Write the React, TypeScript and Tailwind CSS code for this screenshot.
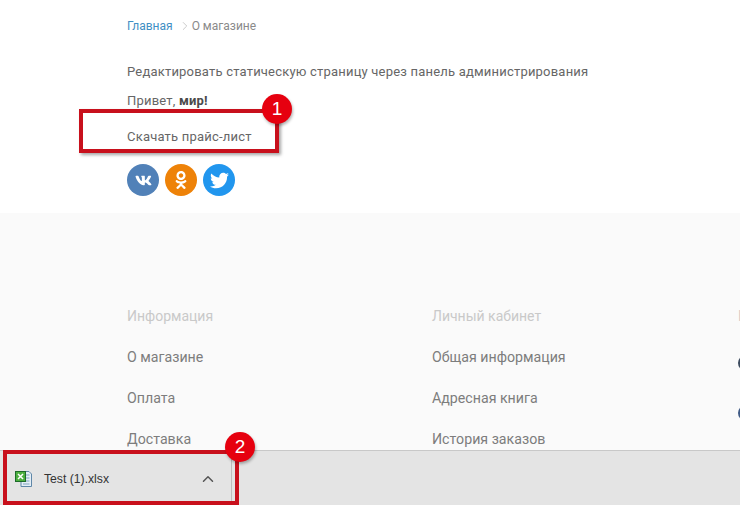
import React from 'react'
import { ChevronRight, ChevronUp } from 'lucide-react'
import { FaOdnoklassniki, FaTwitter, FaVk } from 'react-icons/fa'

const COLUMNS = [
    { title: 'Информация', width: 'w-[305px]', links: ['О магазине', 'Оплата', 'Доставка'] },
    { title: 'Личный кабинет', width: 'w-[306px]', links: ['Общая информация', 'Адресная книга', 'История заказов'] },
]

const ExcelIcon = () => (
    <svg width="18" height="18" viewBox="0 0 18 18" className="shrink-0">
        <path d="M6 1.5h8l2.5 2.5v12.5H6z" fill="#e4eef6" stroke="#5f87a8" />
        <path d="M11 5h3.500M11 8h3.500M11 11h3.500M8 14h6.500" stroke="#7fa3bf" />
        <rect x="0.500" y="1.500" width="10" height="10" fill="#4caf3f" stroke="#1d6b2a" />
        <path d="M3 4l5 5M8 4l-5 5" stroke="#fff" strokeWidth="1.500" />
    </svg>
)

const Callout = ({ n, className }: { n: number; className: string }) => (
    <div
        className={`absolute flex h-[30px] w-[30px] items-center justify-center rounded-full bg-[#e6000f] font-['Liberation_Sans',sans-serif] text-[19px] text-white shadow-[1px_2px_3px_rgba(0,0,0,0.3)] ${className}`}
    >
        {n}
    </div>
)

export default function App() {
    return (
        <div className="relative flex h-[505px] w-[740px] flex-col overflow-hidden bg-white font-['Roboto',sans-serif]">
            <main className="h-[213px] shrink-0 pl-[127px] pt-[18px] text-[13px] tracking-[0.2px] text-[#666]">
                <nav className="flex h-[16px] items-center text-[12px] leading-4 tracking-normal">
                    <span className="text-[#3f8fc4]">Главная</span>
                    <ChevronRight size={14} strokeWidth={1.500} className="ml-[5px] text-[#c4c4c4]" />
                    <span className="text-[#8a8a8a]">О магазине</span>
                </nav>
                <p className="mt-[30px] h-[16px] leading-4">
                    Редактировать статическую страницу через панель администрирования
                </p>
                <p className="mt-[13px] h-[16px] leading-4">
                    Привет, <b className="font-bold text-[#4a4a4a]">мир!</b>
                </p>
                <p className="mt-[20px] h-[16px] leading-4">Скачать прайс-лист</p>
                <div className="mt-[19px] flex gap-[6px]">
                    <span className="flex h-8 w-8 items-center justify-center rounded-full bg-[#5181b8] text-white">
                        <FaVk size={17} />
                    </span>
                    <span className="flex h-8 w-8 items-center justify-center rounded-full bg-[#ee8208] text-white">
                        <FaOdnoklassniki size={18} />
                    </span>
                    <span className="flex h-8 w-8 items-center justify-center rounded-full bg-[#2196ee] text-white">
                        <FaTwitter size={19} />
                    </span>
                </div>
            </main>

            <footer className="flex flex-1 bg-[#fafafa] pl-[127px] pt-[93px]">
                {COLUMNS.map((col) => (
                    <div key={col.title} className={`shrink-0 ${col.width}`}>
                        <h3 className="h-5 text-[14px] leading-5 text-[#c9c9c9]">{col.title}</h3>
                        <ul className="mt-[21px] flex flex-col gap-[21px] text-[14.200px] leading-5 text-[#7d7d7d]">
                            {col.links.map((link) => (
                                <li key={link} className="h-5">
                                    {link}
                                </li>
                            ))}
                        </ul>
                    </div>
                ))}
                <div className="flex-1">
                    <div className="h-5 text-[14px] leading-5 text-[#d8c9c9]">К</div>
                    <div className="mt-[29px] h-4 w-4 rounded-full bg-[#3c4a5e]" />
                    <div className="mt-[34px] h-4 w-4 rounded-full bg-[#3f5a85]" />
                </div>
            </footer>

            {/* browser download shelf */}
            <div className="absolute inset-x-0 bottom-0 flex h-[55px] items-center border-t border-[#c8c8c8] bg-[#e4e4e4]">
                <div className="flex h-full w-[232px] items-center border-r border-[#bdbdbd] pl-[15px] pt-[2px]">
                    <ExcelIcon />
                    <span className="ml-[11px] mt-[1px] font-['Liberation_Sans',sans-serif] text-[12.200px] text-[#333]">
                        Test (1).xlsx
                    </span>
                    <ChevronUp size={18} strokeWidth={2} className="ml-auto mr-[14px] text-[#555]" />
                </div>
            </div>

            {/* annotations */}
            <div className="absolute left-[79px] top-[109px] h-[44px] w-[200px] border-4 border-[#c8101c] shadow-[2px_2px_3px_rgba(0,0,0,0.35)]" />
            <Callout n={1} className="left-[262px] top-[94px]" />
            <div className="absolute left-[3px] top-[450px] h-[55px] w-[236px] border-4 border-[#c8101c]" />
            <Callout n={2} className="left-[225px] top-[432px]" />
        </div>
    )
}
